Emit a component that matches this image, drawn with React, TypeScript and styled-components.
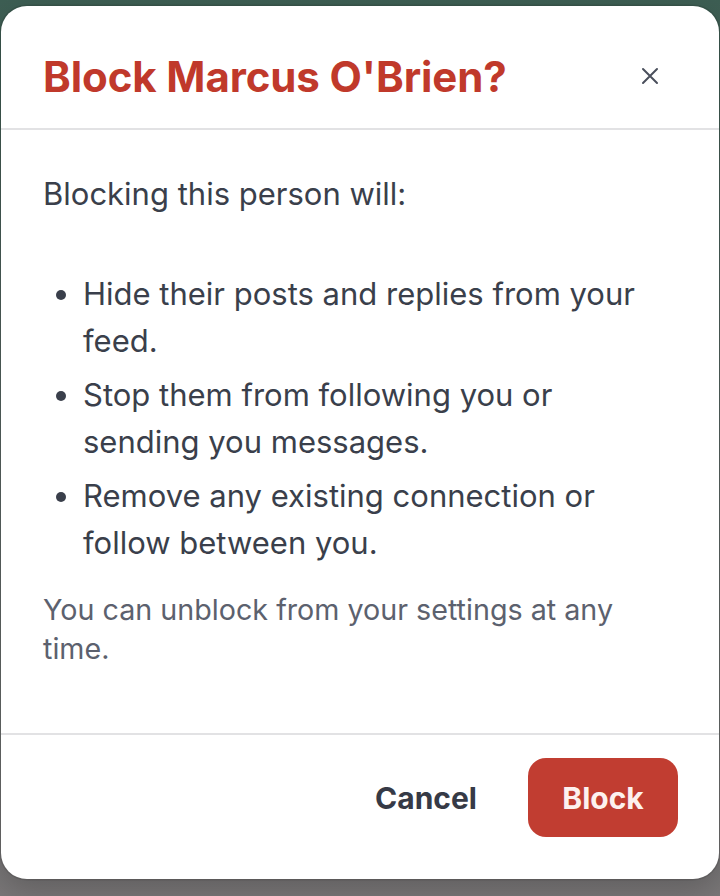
import React from "react";
import styled, { createGlobalStyle } from "styled-components";

const Global = createGlobalStyle`
  html, body {
    margin: 0;
    padding: 0;
    height: 100%;
  }
  body {
    background: linear-gradient(180deg, #3d5e53 0%, #5b6a66 45%, #7a7778 100%);
    font-family: Inter, "Noto Sans", "Liberation Sans", sans-serif;
    -webkit-font-smoothing: antialiased;
  }
  #root {
    min-height: 896px;
  }
`;

const Backdrop = styled.div`
  width: 720px;
  height: 896px;
  box-sizing: border-box;
  padding: 6px 1px 0 1px;
  display: flex;
  justify-content: center;
  align-items: flex-start;
`;

const Dialog = styled.div`
  width: 718px;
  height: 873px;
  background: #ffffff;
  border-radius: 26px;
  box-shadow: 0 0 0 1.5px rgba(0, 0, 0, 0.1), 0 12px 32px rgba(0, 0, 0, 0.2);
  display: flex;
  flex-direction: column;
  overflow: hidden;
`;

const Header = styled.div`
  height: 124px;
  box-sizing: border-box;
  padding: 18px 42px 0 42px;
  display: flex;
  align-items: center;
  justify-content: space-between;
  border-bottom: 2px solid #e2e2e4;
`;

const Title = styled.h2`
  margin: 0;
  font-size: 42px;
  font-weight: 700;
  color: #c0392b;
  letter-spacing: -0.1px;
`;

const CloseButton = styled.button`
  width: 44px;
  height: 44px;
  margin-right: 5px;
  border: none;
  background: transparent;
  display: flex;
  align-items: center;
  justify-content: center;
  cursor: pointer;
  color: #4a4f5c;
  padding: 0;
`;

const Body = styled.div`
  flex: 1;
  padding: 40px 60px 0 42px;
  color: #3a3f4b;
  font-size: 31px;
  line-height: 47px;
`;

const Intro = styled.p`
  margin: 0 0 53px 0;
`;

const List = styled.ul`
  margin: 0 0 24px 0;
  padding: 0 0 0 40px;
`;

const Item = styled.li`
  margin-bottom: 7px;
`;

const Note = styled.p`
  margin: 0;
  font-size: 28.7px;
  line-height: 39px;
  color: #5c616e;
`;

const Footer = styled.div`
  height: 146px;
  box-sizing: border-box;
  border-top: 2px solid #e2e2e4;
  padding: 23px 41px 0 42px;
  display: flex;
  justify-content: flex-end;
  align-items: flex-start;
  gap: 17px;
`;

const Button = styled.button<{ $variant: "ghost" | "danger" }>`
  height: 79px;
  padding: 0 34px;
  border: none;
  border-radius: 18px;
  font-family: inherit;
  font-size: 30px;
  font-weight: 700;
  cursor: pointer;
  background: ${(p) => (p.$variant === "danger" ? "#c13d31" : "transparent")};
  color: ${(p) => (p.$variant === "danger" ? "#fdf1ef" : "#363a46")};
  min-width: ${(p) => (p.$variant === "danger" ? "150px" : "auto")};
`;

export default function App() {
  return (
    <>
      <Global />
      <Backdrop>
        <Dialog role="dialog" aria-labelledby="block-title">
          <Header>
            <Title id="block-title">Block Marcus O'Brien?</Title>
            <CloseButton aria-label="Close">
              <svg width="18" height="18" viewBox="0 0 18 18" fill="none">
                <path
                  d="M2 2L16 16M16 2L2 16"
                  stroke="currentColor"
                  strokeWidth="2"
                  strokeLinecap="round"
                />
              </svg>
            </CloseButton>
          </Header>
          <Body>
            <Intro>Blocking this person will:</Intro>
            <List>
              <Item>Hide their posts and replies from your feed.</Item>
              <Item>Stop them from following you or sending you messages.</Item>
              <Item>Remove any existing connection or follow between you.</Item>
            </List>
            <Note>You can unblock from your settings at any time.</Note>
          </Body>
          <Footer>
            <Button $variant="ghost">Cancel</Button>
            <Button $variant="danger">Block</Button>
          </Footer>
        </Dialog>
      </Backdrop>
    </>
  );
}
